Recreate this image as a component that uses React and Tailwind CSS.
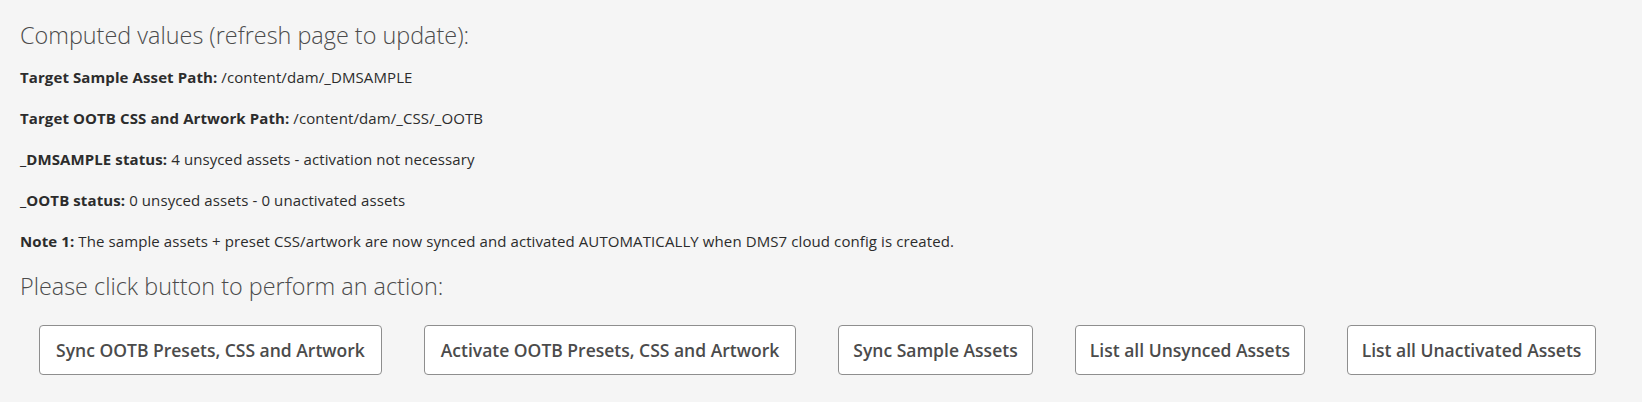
const rows = [
    {label: "Target Sample Asset Path:", value: "/content/dam/_DMSAMPLE"},
    {label: "Target OOTB CSS and Artwork Path:", value: "/content/dam/_CSS/_OOTB"},
    {label: "_DMSAMPLE status:", value: "4 unsyced assets - activation not necessary"},
    {label: "_OOTB status:", value: "0 unsyced assets - 0 unactivated assets"},
    {label: "Note 1:", value: "The sample assets + preset CSS/artwork are now synced and activated AUTOMATICALLY when DMS7 cloud config is created."},
];

const buttons = [
    {text: "Sync OOTB Presets, CSS and Artwork", w: "w-[343px]"},
    {text: "Activate OOTB Presets, CSS and Artwork", w: "w-[372px]"},
    {text: "Sync Sample Assets", w: "w-[195px]"},
    {text: "List all Unsynced Assets", w: "w-[230px]"},
    {text: "List all Unactivated Assets", w: "w-[249px]"},
];

const App = () => {
    return (
        <div className="w-[1642px] h-[402px] bg-[#f5f5f5] pl-[20px] pt-[19px] font-['Open_Sans',sans-serif] text-[#2c2c2c]">
            <h2 className="text-[23.4px] leading-[32px] font-light text-[#4b4b4b]">Computed values (refresh page to update):</h2>
            <div className="mt-[16px] flex flex-col gap-[21px]">
                {rows.map((r, i) => (
                    <p key={i} className="text-[15px] leading-[20px] tracking-[0.1px]">
                        <span className="font-bold">{r.label}</span> {r.value}
                    </p>
                ))}
            </div>
            <h2 className="mt-[19px] text-[23.4px] leading-[32px] font-light text-[#4b4b4b]">Please click button to perform an action:</h2>
            <div className="mt-[23px] pl-[19px] flex gap-[42px]">
                {buttons.map((b, i) => (
                    <button key={i}
                            className={`${b.w} h-[50px] bg-white border border-[#8e8e8e] rounded-[4px] text-[17.5px] font-semibold text-[#4b4b4b] flex items-center justify-center`}>
                        {b.text}
                    </button>
                ))}
            </div>
        </div>
    )
}

export default App;
